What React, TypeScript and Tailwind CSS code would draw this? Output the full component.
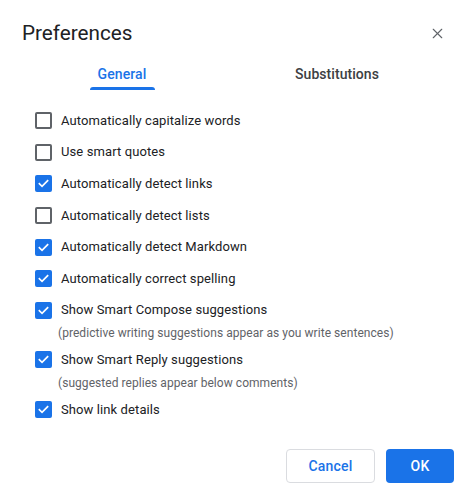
import { X } from "lucide-react";

type Option = { label: string; checked: boolean; hint?: string };

const options: Option[] = [
    { label: "Automatically capitalize words", checked: false },
    { label: "Use smart quotes", checked: false },
    { label: "Automatically detect links", checked: true },
    { label: "Automatically detect lists", checked: false },
    { label: "Automatically detect Markdown", checked: true },
    { label: "Automatically correct spelling", checked: true },
    { label: "Show Smart Compose suggestions", checked: true, hint: "(predictive writing suggestions appear as you write sentences)" },
    { label: "Show Smart Reply suggestions", checked: true, hint: "(suggested replies appear below comments)" },
    { label: "Show link details", checked: true },
];

function Checkbox({ checked }: { checked: boolean }) {
    if (checked) {
        return (
            <div className="w-[17px] h-[17px] rounded-[2px] bg-[#1a73e8] flex items-center justify-center shrink-0">
                <svg width="13" height="13" viewBox="0 0 24 24" fill="none" stroke="white" strokeWidth="3.2" strokeLinecap="square">
                    <path d="M4.5 12.5l4.8 4.6L19.5 7" />
                </svg>
            </div>
        );
    }
    return <div className="w-[17px] h-[17px] rounded-[2px] border-2 border-[#5f6368] shrink-0" />;
}

export default function App() {
    return (
        <div className="w-[474px] h-[503px] bg-white text-[#202124] font-['Roboto','Liberation_Sans',sans-serif] flex flex-col">
            {/* Header */}
            <div className="flex items-center justify-between pl-[22px] pr-[28px] pt-[19px]">
                <h1 className="text-[20.7px] leading-[28px] font-normal text-[#202124]">Preferences</h1>
                <X size={17} strokeWidth={1.6} className="text-[#5f6368]" />
            </div>

            {/* Tabs */}
            <div className="flex pl-[22px] pr-[22px] mt-[17px]">
                <div className="w-[200px] flex flex-col items-center">
                    <span className="text-[14px] leading-[20px] font-medium text-[#1a73e8] tracking-[0.1px]">General</span>
                    <div className="mt-[3px] w-[65px] h-[3px] rounded-t-[3px] bg-[#1a73e8]" />
                </div>
                <div className="flex-1 flex flex-col items-center">
                    <span className="text-[14px] leading-[20px] font-medium text-[#3c4043] tracking-[0.05px]">Substitutions</span>
                </div>
            </div>

            {/* Options */}
            <div className="flex flex-col pl-[35px] mt-[15px]">
                {options.map(o => (
                    <div key={o.label} className="flex flex-col">
                        <div className="flex items-center h-[31.6px] gap-[9px]">
                            <Checkbox checked={o.checked} />
                            <span className="text-[13px] leading-[20px] tracking-[0.1px] text-[#202124]">{o.label}</span>
                        </div>
                        {o.hint && (
                            <div className="pl-[23px] -mt-[3px] h-[21px] text-[12px] leading-[20px] tracking-[0.05px] text-[#5f6368]">{o.hint}</div>
                        )}
                    </div>
                ))}
            </div>

            {/* Footer */}
            <div className="flex justify-end gap-[11px] pr-[20px] mt-[24px]">
                <button className="w-[89px] h-[34px] rounded-[4px] border border-[#dadce0] text-[14px] font-medium text-[#1a73e8] tracking-[0.2px]">Cancel</button>
                <button className="w-[68px] h-[34px] rounded-[4px] bg-[#1a73e8] text-[14px] font-medium text-white tracking-[0.2px]">OK</button>
            </div>
        </div>
    );
}
